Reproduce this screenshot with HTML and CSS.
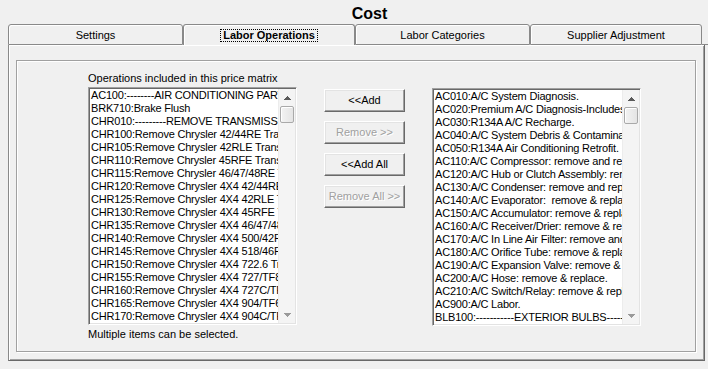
FILE: index.html
```html
<!DOCTYPE html>
<html>
<head>
<meta charset="utf-8">
<link rel="stylesheet" href="styles.css">
</head>
<body>
<div class="title">Cost</div>
<div class="tabs">
  <div class="tab tab-wide">Settings</div>
  <div class="tab tab-narrow active"><span class="focus">Labor Operations</span></div>
  <div class="tab tab-wide">Labor Categories</div>
  <div class="tab tab-narrow">Supplier Adjustment</div>
  <div class="tab-end"></div>
</div>
<div class="panel">
  <div class="group">
    <div class="col">
      <div class="label">Operations included in this price matrix</div>
      <div class="listbox">
        <ul class="items">
          <li>AC100:--------AIR CONDITIONING PARTS--------</li>
          <li>BRK710:Brake Flush</li>
          <li>CHR010:---------REMOVE TRANSMISSIONS---------</li>
          <li>CHR100:Remove Chrysler 42/44RE Transmission</li>
          <li>CHR105:Remove Chrysler 42RLE Transmission</li>
          <li>CHR110:Remove Chrysler 45RFE Transmission</li>
          <li>CHR115:Remove Chrysler 46/47/48RE Transmission</li>
          <li>CHR120:Remove Chrysler 4X4 42/44RE Transmission</li>
          <li>CHR125:Remove Chrysler 4X4 42RLE Transmission</li>
          <li>CHR130:Remove Chrysler 4X4 45RFE Transmission</li>
          <li>CHR135:Remove Chrysler 4X4 46/47/48RE Transmission</li>
          <li>CHR140:Remove Chrysler 4X4 500/42RH Transmission</li>
          <li>CHR145:Remove Chrysler 4X4 518/46RH Transmission</li>
          <li>CHR150:Remove Chrysler 4X4 722.6 Transmission</li>
          <li>CHR155:Remove Chrysler 4X4 727/TF8 Transmission</li>
          <li>CHR160:Remove Chrysler 4X4 727C/TF8 Transmission</li>
          <li>CHR165:Remove Chrysler 4X4 904/TF6 Transmission</li>
          <li>CHR170:Remove Chrysler 4X4 904C/TF6 Transmission</li>
        </ul>
        <div class="vscroll">
          <div class="sbtn"><svg class="arrow up" width="7" height="4" viewBox="0 0 7 4"><rect x="3" y="0" width="1" height="1"/><rect x="2" y="1" width="3" height="1"/><rect x="1" y="2" width="5" height="1"/><rect x="0" y="3" width="7" height="1"/></svg></div>
          <div class="thumb"></div>
          <div class="track"></div>
          <div class="sbtn"><svg class="arrow down" width="7" height="4" viewBox="0 0 7 4"><rect x="0" y="0" width="7" height="1"/><rect x="1" y="1" width="5" height="1"/><rect x="2" y="2" width="3" height="1"/><rect x="3" y="3" width="1" height="1"/></svg></div>
        </div>
      </div>
      <div class="label hint">Multiple items can be selected.</div>
    </div>
    <div class="buttons">
      <button class="btn">&lt;&lt;Add</button>
      <button class="btn" disabled>Remove &gt;&gt;</button>
      <button class="btn">&lt;&lt;Add All</button>
      <button class="btn" disabled>Remove All &gt;&gt;</button>
    </div>
    <div class="col col-right">
      <div class="listbox">
        <ul class="items">
          <li>AC010:A/C System Diagnosis.</li>
          <li>AC020:Premium A/C Diagnosis-Includes Leak Test</li>
          <li>AC030:R134A A/C Recharge.</li>
          <li>AC040:A/C System Debris &amp; Contamination Removal</li>
          <li>AC050:R134A Air Conditioning Retrofit.</li>
          <li>AC110:A/C Compressor: remove and replace.</li>
          <li>AC120:A/C Hub or Clutch Assembly: remove &amp; replace.</li>
          <li>AC130:A/C Condenser: remove and replace.</li>
          <li>AC140:A/C Evaporator:&nbsp; remove &amp; replace.</li>
          <li>AC150:A/C Accumulator: remove &amp; replace.</li>
          <li>AC160:A/C Receiver/Drier: remove &amp; replace.</li>
          <li>AC170:A/C In Line Air Filter: remove and replace.</li>
          <li>AC180:A/C Orifice Tube: remove &amp; replace.</li>
          <li>AC190:A/C Expansion Valve: remove &amp; replace.</li>
          <li>AC200:A/C Hose: remove &amp; replace.</li>
          <li>AC210:A/C Switch/Relay: remove &amp; replace.</li>
          <li>AC900:A/C Labor.</li>
          <li>BLB100:-----------EXTERIOR BULBS-----------</li>
        </ul>
        <div class="vscroll">
          <div class="sbtn"><svg class="arrow up" width="7" height="4" viewBox="0 0 7 4"><rect x="3" y="0" width="1" height="1"/><rect x="2" y="1" width="3" height="1"/><rect x="1" y="2" width="5" height="1"/><rect x="0" y="3" width="7" height="1"/></svg></div>
          <div class="thumb"></div>
          <div class="track"></div>
          <div class="sbtn"><svg class="arrow down" width="7" height="4" viewBox="0 0 7 4"><rect x="0" y="0" width="7" height="1"/><rect x="1" y="1" width="5" height="1"/><rect x="2" y="2" width="3" height="1"/><rect x="3" y="3" width="1" height="1"/></svg></div>
        </div>
      </div>
    </div>
  </div>
</div>
</body>
</html>
```
FILE: styles.css
```css
html, body {
  margin: 0;
  padding: 0;
}
body {
  width: 708px;
  height: 369px;
  overflow: hidden;
  background: #f0f0f0;
  color: #000;
  font-family: "Liberation Sans", Arial, sans-serif;
  font-size: 11px;
}
.title {
  box-sizing: border-box;
  height: 24px;
  padding: 6px 0 0 31px;
  text-align: center;
  font-weight: bold;
  font-size: 16px;
  line-height: 16px;
}
.tabs {
  display: flex;
  padding-left: 8px;
  height: 21px;
}
.tab {
  box-sizing: border-box;
  height: 21px;
  border: 1px solid #898989;
  border-radius: 3px 3px 0 0;
  background: #f0f0f0;
  box-shadow: inset 1px 1px #fff;
  text-align: center;
  line-height: 18px;
  padding-top: 1px;
  white-space: nowrap;
}
.tab-wide { width: 175px; }
.tab-narrow { width: 172px; }
.tab.active {
  border-bottom: none;
  font-weight: bold;
}
.focus {
  display: inline-block;
  border: 1px dotted #000;
  line-height: 11px;
  padding: 0 2px 0 2px;
}
.tab-end {
  flex: 1;
  border-bottom: 1px solid #898989;
}
.panel {
  box-sizing: border-box;
  width: 697px;
  height: 316px;
  margin-left: 8px;
  border-left: 1px solid #898989;
  border-right: 1px solid #696969;
  border-bottom: 1px solid #696969;
  box-shadow: inset 1px 0 #fff, inset 0 1px #fff, inset -1px -1px #a0a0a0;
  padding: 15px 0 0 7px;
}
.group {
  box-sizing: border-box;
  width: 680px;
  height: 292px;
  border: 1px solid #a0a0a0;
  box-shadow: inset 1px 1px #fff, 1px 1px #fff;
  display: flex;
  align-items: flex-start;
  padding: 11px 0 0 71px;
}
.col {
  display: flex;
  flex-direction: column;
  width: 209px;
}
.label {
  height: 13px;
  line-height: 13px;
  white-space: nowrap;
}
.hint {
  margin-top: 3px;
}
.listbox {
  box-sizing: border-box;
  margin-top: 2px;
  width: 209px;
  height: 238px;
  display: flex;
  border: 1px solid;
  border-color: #a0a0a0 #fff #fff #a0a0a0;
  padding: 1px;
  background: #fff;
  box-shadow: inset 1px 1px #696969, inset -1px -1px #e3e3e3;
}
.col-right {
  margin-left: 27px;
  margin-top: 14px;
}
.items {
  list-style: none;
  margin: 0;
  padding: 0;
  flex: 1;
  min-width: 0;
  overflow: hidden;
}
.items li {
  height: 13px;
  line-height: 13px;
  padding-left: 1px;
  white-space: nowrap;
  overflow: hidden;
  letter-spacing: -0.2px;
}
.vscroll {
  width: 17px;
  display: flex;
  flex-direction: column;
  background: #f4f4f4;
  border-left: 1px solid #ececec;
  box-sizing: border-box;
}
.sbtn {
  height: 17px;
  display: flex;
  align-items: center;
  justify-content: center;
  flex: none;
}
.arrow.up { fill: #5a5a5a; }
.arrow.down { fill: #9a9a9a; }
.thumb {
  flex: none;
  height: 15px;
  margin: 0 1px 0 1px;
  border: 1px solid #a9a9a9;
  border-radius: 2px;
  background: linear-gradient(to right, #f3f3f3, #e4e4e4);
  box-shadow: inset 1px 1px #fff;
}
.track {
  flex: 1;
}
.buttons {
  display: flex;
  flex-direction: column;
  gap: 9px;
  margin-left: 27px;
  margin-top: 17px;
}
.btn {
  box-sizing: border-box;
  width: 81px;
  height: 23px;
  margin: 0;
  padding: 0;
  border: 1px solid;
  border-color: #fff #696969 #696969 #fff;
  box-shadow: inset -1px -1px #a0a0a0, inset 1px 1px #e3e3e3;
  background: #f0f0f0;
  color: #000;
  font-family: inherit;
  font-size: 11px;
  line-height: 21px;
  text-align: center;
  border-radius: 0;
}
.btn:disabled {
  color: #a0a0a0;
  text-shadow: 1px 1px #fff;
}
```
